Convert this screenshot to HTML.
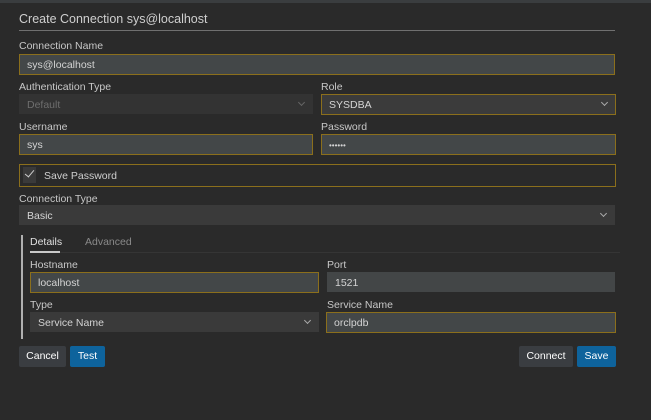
<!DOCTYPE html>
<html><head><style>
body{margin:0;width:651px;height:420px;background:#2a2a2a;font-family:"Liberation Sans",sans-serif;font-size:10.5px;color:#cccccc;position:relative;overflow:hidden}
.a{position:absolute;box-sizing:border-box}
.top{left:0;top:0;width:651px;height:3px;background:#3a3d3f}
.lbl{color:#c8c8c8;font-size:10.5px;line-height:12px}
.in{background:#434748;border:1px solid #8b6f1c;padding-left:7px;padding-top:1px;line-height:19px;color:#d4d4d4}
.nb{border:1px solid transparent}
.sel{background:#3a3a3a}
.chev{position:absolute;right:8px;top:5px;width:4px;height:4px;border-right:1px solid #aaa;border-bottom:1px solid #aaa;transform:rotate(45deg)}
.btn{text-align:center;line-height:21px;color:#fff;border-radius:2px}
</style></head><body>
<div class="a top"></div>
<div class="a" style="left:19px;top:12px;font-size:12.5px;color:#cfcfcf">Create Connection sys@localhost</div>
<div class="a" style="left:19px;top:30px;width:596px;height:1px;background:#707070"></div>

<div class="a lbl" style="left:19px;top:40px">Connection Name</div>
<div class="a in" style="left:19px;top:54px;width:596px;height:21px">sys@localhost</div>

<div class="a lbl" style="left:19px;top:81px">Authentication Type</div>
<div class="a in nb" style="left:19px;top:94px;width:294px;height:20px;background:#333333;color:#6e6e6e">Default<div class="chev" style="border-color:#666"></div></div>
<div class="a lbl" style="left:321px;top:81px">Role</div>
<div class="a in" style="left:321px;top:94px;width:295px;height:21px;background:#3b3b3b">SYSDBA<div class="chev"></div></div>

<div class="a lbl" style="left:19px;top:121px">Username</div>
<div class="a in" style="left:19px;top:134px;width:294px;height:21px">sys</div>
<div class="a lbl" style="left:321px;top:121px">Password</div>
<div class="a in" style="left:321px;top:134px;width:295px;height:21px;font-size:8px">••••••</div>

<div class="a" style="left:19px;top:164px;width:597px;height:23px;border:1px solid #8b6f1c"></div>
<div class="a" style="left:23px;top:167px;width:13px;height:16px;background:#3a3a3a"></div>
<div class="a" style="left:27px;top:168px;width:5px;height:9px;border-right:1.5px solid #ccc;border-bottom:1.5px solid #ccc;transform:rotate(40deg)"></div>
<div class="a" style="left:44px;top:169px;color:#cfcfcf;line-height:14px">Save Password</div>

<div class="a lbl" style="left:19px;top:193px">Connection Type</div>
<div class="a in nb sel" style="left:19px;top:205px;width:596px;height:20px;line-height:18px">Basic<div class="chev"></div></div>

<div class="a" style="left:21px;top:235px;width:2px;height:104px;background:#b0b0b0"></div>
<div class="a" style="left:30px;top:236px;color:#e0e0e0">Details</div>
<div class="a" style="left:85px;top:236px;color:#8a8a8a">Advanced</div>
<div class="a" style="left:30px;top:252px;width:590px;height:1px;background:#353535"></div>
<div class="a" style="left:30px;top:251px;width:30px;height:2px;background:#c8c8c8"></div>

<div class="a lbl" style="left:30px;top:259px">Hostname</div>
<div class="a in" style="left:30px;top:272px;width:289px;height:21px">localhost</div>
<div class="a lbl" style="left:327px;top:259px">Port</div>
<div class="a in nb" style="left:327px;top:272px;width:288px;height:20px;background:#434647">1521</div>

<div class="a lbl" style="left:30px;top:299px">Type</div>
<div class="a in nb sel" style="left:30px;top:312px;width:289px;height:20px;line-height:18px">Service Name<div class="chev"></div></div>
<div class="a lbl" style="left:327px;top:299px">Service Name</div>
<div class="a in" style="left:326px;top:312px;width:290px;height:21px">orclpdb</div>

<div class="a btn" style="left:19px;top:346px;width:47px;height:21px;background:#3a3d41">Cancel</div>
<div class="a btn" style="left:70px;top:346px;width:35px;height:21px;background:#0e639c">Test</div>
<div class="a btn" style="left:519px;top:346px;width:54px;height:21px;background:#3a3d41">Connect</div>
<div class="a btn" style="left:577px;top:346px;width:39px;height:21px;background:#0e639c">Save</div>
</body></html>
